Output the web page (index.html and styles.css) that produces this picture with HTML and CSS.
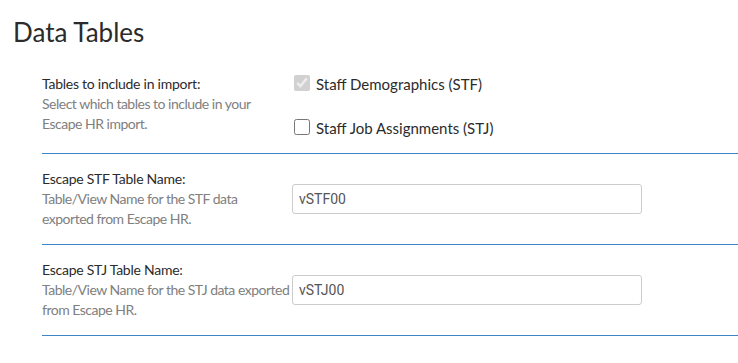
FILE: index.html
```html
<!DOCTYPE html>
<html lang="en">

<head>
    <meta charset="UTF-8">
    <meta name="viewport" content="width=device-width, initial-scale=1.0">
    <title>Data Tables</title>
    <link rel="stylesheet" href="styles.css">
</head>

<body>
    <h2 class="page-title">Data Tables</h2>
    <form class="settings">
        <div class="setting setting-top">
            <div class="setting-info">
                <label class="setting-label">Tables to include in import:</label>
                <p class="setting-help">Select which tables to include in your Escape HR import.</p>
            </div>
            <div class="setting-field">
                <div class="check-row">
                    <input id="stf" type="checkbox" checked disabled />
                    <label for="stf">Staff Demographics (STF)</label>
                </div>
                <div class="check-row">
                    <input id="stj" type="checkbox" />
                    <label for="stj">Staff Job Assignments (STJ)</label>
                </div>
            </div>
        </div>
        <div class="setting">
            <div class="setting-info">
                <label class="setting-label" for="stf-name">Escape STF Table Name:</label>
                <p class="setting-help">Table/View Name for the STF data<br>exported from Escape HR.</p>
            </div>
            <div class="setting-field">
                <input class="text-input" id="stf-name" type="text" value="vSTF00" />
            </div>
        </div>
        <div class="setting">
            <div class="setting-info">
                <label class="setting-label" for="stj-name">Escape STJ Table Name:</label>
                <p class="setting-help">Table/View Name for the STJ data exported from Escape HR.</p>
            </div>
            <div class="setting-field">
                <input class="text-input" id="stj-name" type="text" value="vSTJ00" />
            </div>
        </div>
    </form>
</body>

</html>
```

FILE: styles.css
```css
body {
    font-family: Lato, 'Liberation Sans', sans-serif;
    margin: 0;
    color: #2b2b2b;
    background: #fff;
}

.page-title {
    font-size: 26px;
    font-weight: 400;
    line-height: 30px;
    margin: 17px 0 0 13px;
}

.settings {
    margin: 12px 0 0 42px;
}

.setting {
    display: flex;
    align-items: center;
    padding: 15px 0;
    border-bottom: 1px solid #3d85c6;
}

.setting-top {
    align-items: flex-start;
}

.setting-info {
    width: 250px;
    flex: none;
    font-size: 14px;
    line-height: 20px;
}

.setting-label {
    display: block;
    letter-spacing: -0.25px;
}

.setting-help {
    margin: 0;
    color: #808080;
    letter-spacing: -0.5px;
}

.check-row {
    display: flex;
    align-items: center;
    font-size: 15px;
    line-height: 20px;
}

.check-row + .check-row {
    margin-top: 24px;
}

.check-row input {
    width: 16px;
    height: 16px;
    margin: 0 6px 2px 2px;
}

.text-input {
    box-sizing: border-box;
    width: 350px;
    height: 30px;
    padding: 0 6px;
    border: 1px solid #ccc;
    border-radius: 3px;
    font-family: Roboto, 'Liberation Sans', sans-serif;
    font-size: 14px;
    color: #555;
}
```
